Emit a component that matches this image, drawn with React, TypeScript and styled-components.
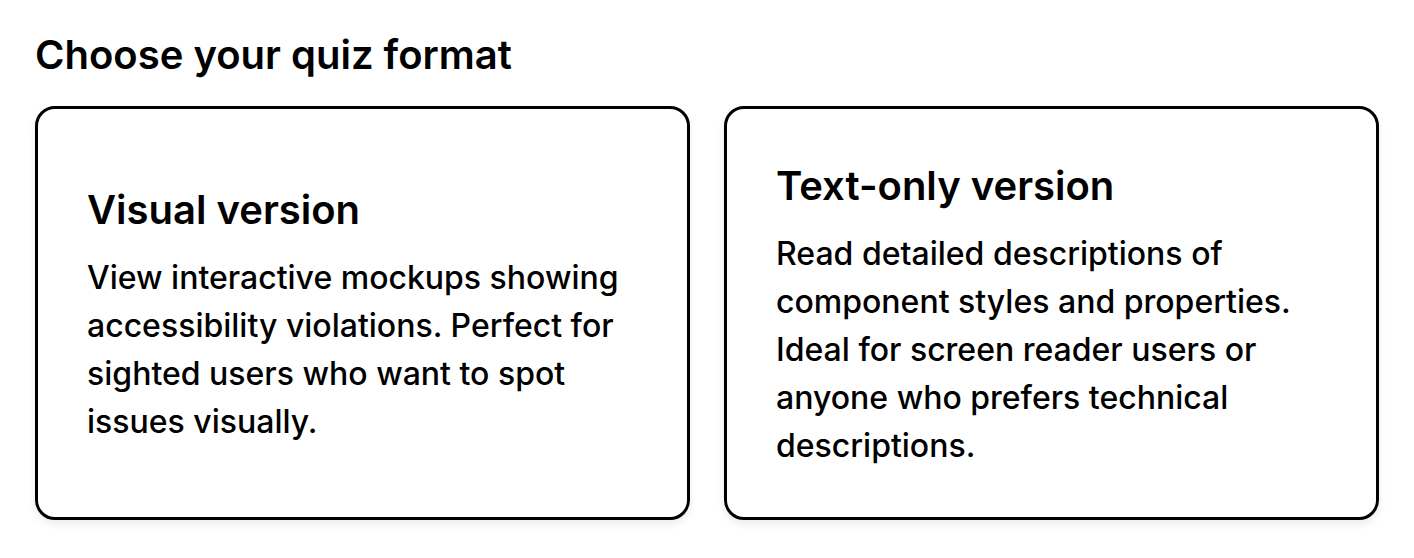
import React from "react";
import styled, { createGlobalStyle } from "styled-components";

const GlobalStyle = createGlobalStyle`
  body {
    margin: 0;
    background: #ffffff;
    font-family: Inter, "Noto Sans", "Liberation Sans", sans-serif;
    color: #000000;
  }
`;

const Page = styled.main`
  padding: 31px 35px 36px;
`;

const Heading = styled.h2`
  margin: 0 0 27px;
  font-size: 40px;
  line-height: 48px;
  font-weight: 600;
`;

const Grid = styled.div`
  display: grid;
  grid-template-columns: 1fr 1fr;
  gap: 34px;
`;

const Card = styled.button`
  height: 414px;
  box-sizing: border-box;
  display: flex;
  flex-direction: column;
  justify-content: center;
  align-items: flex-start;
  text-align: left;
  padding: 6px 48px 0 49px;
  background: #ffffff;
  border: 3px solid #000000;
  border-radius: 20px;
  box-shadow: 0 4px 8px rgba(0, 0, 0, 0.08);
  font-family: inherit;
  color: inherit;
  cursor: pointer;
`;

const CardTitle = styled.h3`
  margin: 0 0 20px;
  font-size: 40px;
  line-height: 48px;
  font-weight: 600;
`;

const CardText = styled.p`
  margin: 0;
  font-size: 32px;
  line-height: 48px;
  font-weight: 500;
`;

const formats = [
  {
    title: "Visual version",
    text: "View interactive mockups showing accessibility violations. Perfect for sighted users who want to spot issues visually.",
  },
  {
    title: "Text-only version",
    text: "Read detailed descriptions of component styles and properties. Ideal for screen reader users or anyone who prefers technical descriptions.",
  },
];

export default function App() {
  return (
    <>
      <GlobalStyle />
      <Page>
        <Heading>Choose your quiz format</Heading>
        <Grid>
          {formats.map((f) => (
            <Card key={f.title}>
              <CardTitle>{f.title}</CardTitle>
              <CardText>{f.text}</CardText>
            </Card>
          ))}
        </Grid>
      </Page>
    </>
  );
}
